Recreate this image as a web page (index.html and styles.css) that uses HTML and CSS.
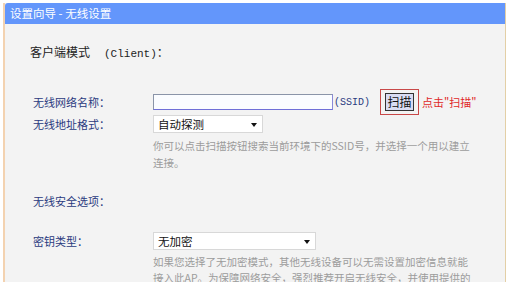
FILE: index.html
```html
<!DOCTYPE html>
<html lang="zh-CN">
<head>
  <meta charset="UTF-8" />
  <title>设置向导 - 无线设置</title>
  <link rel="stylesheet" href="styles.css">
</head>
<body>

  <div class="frame">
    <div class="title">设置向导 - 无线设置</div>

    <div class="content">
      <p class="mode">客户端模式　<span class="en">(Client)</span>：</p>

      <div class="row ssid-row">
        <span class="label">无线网络名称：</span>
        <div class="field">
          <div class="text-box"></div>
          <span class="en unit">(SSID)</span>
          <span class="scan-frame"><button class="scan-btn">扫描</button></span>
          <span class="hint">点击"扫描"</span>
        </div>
      </div>

      <div class="row">
        <span class="label">无线地址格式：</span>
        <div class="field">
          <div class="select short">自动探测<span class="arrow"></span></div>
        </div>
      </div>
      <p class="help">你可以点击扫描按钮搜索当前环境下的SSID号，并选择一个用以建立<br>连接。</p>

      <p class="section">无线安全选项：</p>

      <div class="row">
        <span class="label">密钥类型：</span>
        <div class="field">
          <div class="select long">无加密<span class="arrow"></span></div>
        </div>
      </div>
      <p class="help">如果您选择了无加密模式，其他无线设备可以无需设置加密信息就能<br>接入此AP。为保障网络安全，强烈推荐开启无线安全，并使用提供的</p>
    </div>
  </div>

</body>
</html>
```

FILE: styles.css
```css
body {
  margin: 0;
  padding: 0;
  background: #fff;
  font-family: "Noto Sans CJK SC", "Liberation Sans", sans-serif;
  font-size: 11px;
  overflow: hidden;
}

.frame {
  margin: 3px 4px 0 3px;
  border-left: 2px solid #f3d2b0;
  border-right: 1px solid #e3cfa6;
  background: #f3f3f3;
  height: 279px;
  overflow: hidden;
}

.title {
  height: 21px;
  line-height: 20px;
  background: #6396fb;
  color: #fff;
  padding-left: 5px;
  font-size: 11.5px;
  border-top-left-radius: 3px;
}

.content {
  padding: 20px 0 0 25px;
}

p {
  margin: 0;
}

.en {
  font-family: "Liberation Mono", monospace;
  font-size: 10px;
}

.mode {
  line-height: 16px;
  font-size: 12px;
  color: #222;
}

.mode .en {
  font-size: 11px;
  margin-left: 2px;
}

.row {
  display: flex;
  align-items: center;
  height: 18px;
}

.ssid-row {
  height: 26px;
  margin-top: 27px;
}

.label {
  box-sizing: border-box;
  width: 123px;
  padding-left: 3px;
  color: #2a3a80;
}

.field {
  display: flex;
  align-items: center;
}

.text-box {
  width: 178px;
  height: 14px;
  border: 1px solid #8a94a8;
  border-bottom-color: #6f6fd8;
  border-right-color: #8a8ad8;
  background: #fafcff;
}

.unit {
  color: #2a3a80;
  margin-left: 1px;
  width: 46px;
}

.scan-frame {
  display: flex;
  align-items: center;
  justify-content: center;
  width: 37px;
  height: 24px;
  border: 1px solid #c84848;
}

.scan-btn {
  width: 29px;
  height: 18px;
  padding: 0;
  border: 1px solid #333;
  background: #d9dcf3;
  font-family: inherit;
  font-size: 12px;
  line-height: 16px;
  color: #111;
}

.hint {
  color: #e02828;
  margin-left: 3px;
  font-size: 11px;
}

.select {
  position: relative;
  height: 16px;
  line-height: 16px;
  border: 1px solid #d8d8d8;
  background: #fff;
  padding-left: 4px;
  color: #111;
  font-size: 11.5px;
}

.select.short {
  width: 104px;
}

.select.long {
  width: 157px;
}

.arrow {
  position: absolute;
  right: 5px;
  top: 7px;
  border-left: 3px solid transparent;
  border-right: 3px solid transparent;
  border-top: 4px solid #111;
}

.help {
  margin: 4px 0 0 123px;
  line-height: 17px;
  font-size: 10.5px;
  color: #9c9c9c;
  white-space: nowrap;
}

.section {
  margin-top: 22px;
  padding-left: 3px;
  line-height: 16px;
  color: #2a3a80;
}

.section + .row {
  margin-top: 23px;
}

.section + .row + .help {
  line-height: 16px;
}
```
